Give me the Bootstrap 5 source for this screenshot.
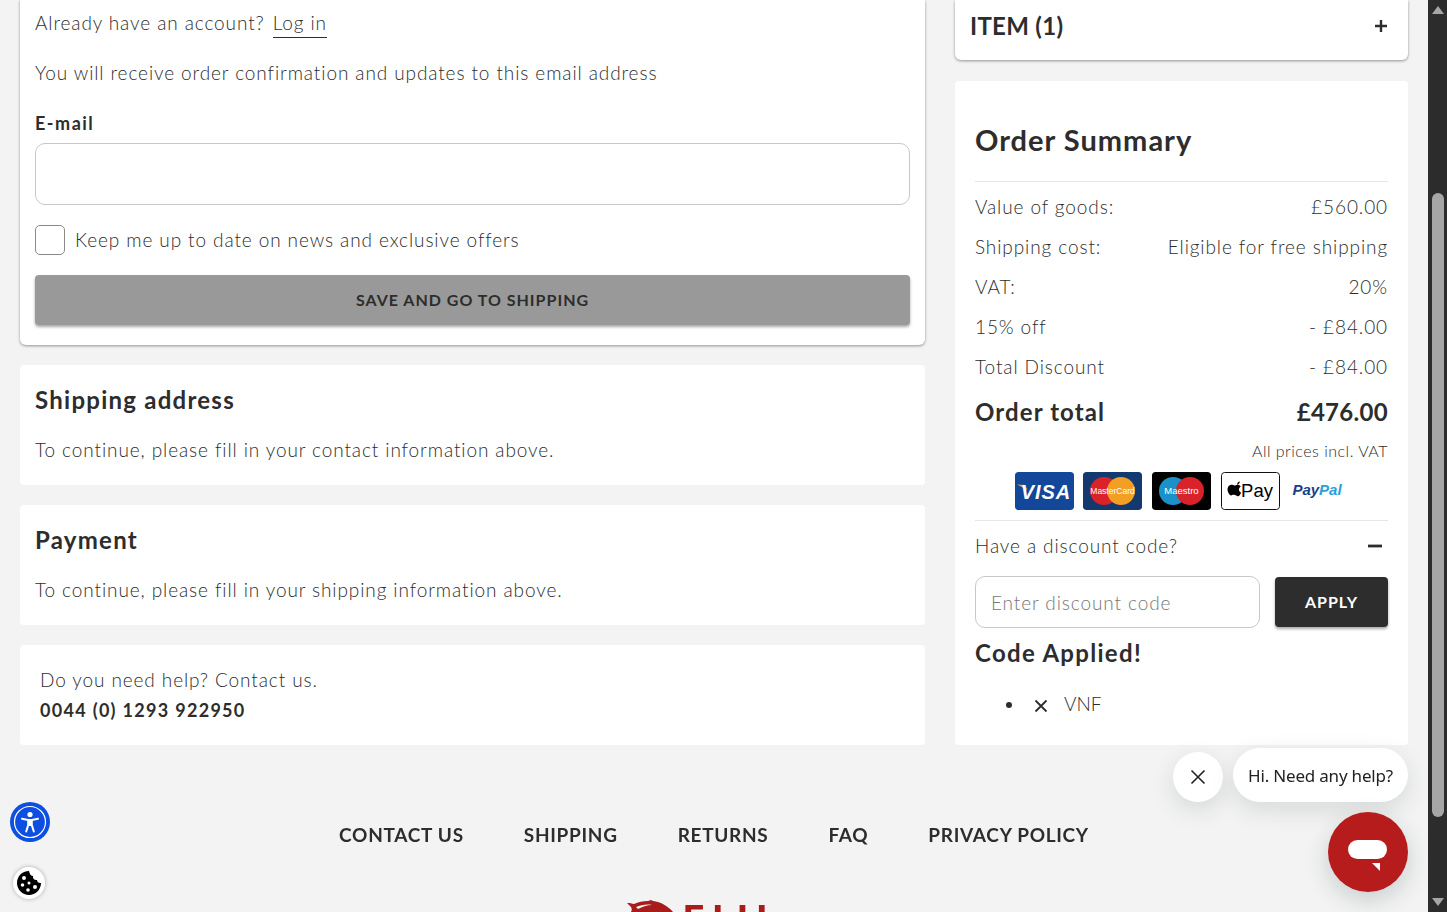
<!DOCTYPE html>
<html lang="en">
<head>
  <meta charset="UTF-8">
  <meta name="viewport" content="width=device-width, initial-scale=1.0">
  <title>Checkout</title>
  <link href="https://cdn.jsdelivr.net/npm/bootstrap@5.3.0/dist/css/bootstrap.min.css" rel="stylesheet">
  <style>
    html, body { height: 912px; overflow: hidden; }
    body {
      background: #f3f3f3;
      color: #2d2d2d;
      font-family: "Lato", "Liberation Sans", sans-serif;
      font-size: 19px;
      font-weight: 300;
      line-height: 30px;
      letter-spacing: .9px;
    }
    .page-wrap { width: 1428px; height: 912px; overflow: hidden; padding: 0 20px; }
    .left-col { width: 905px; }
    .right-col { width: 453px; }
    .panel { background: #fff; border-radius: 4px; padding: 20px 15px; margin-bottom: 20px; }
    .panel-open { box-shadow: 0 1px 3px rgba(0,0,0,.4); border-radius: 0 0 6px 6px; }
    .panel-first { padding-top: 8px; }
    .para-gap { margin: 0 0 20px; }
    .login-link { color: #2d2d2d; text-decoration: none; border-bottom: 1px solid #2d2d2d; padding-bottom: 3px; margin-left: 2px; }
    .field-label { font-size: 18px; font-weight: 700; display: block; margin-bottom: 5px; letter-spacing: 1.5px; }
    .mail-input { height: 62px; border: 1px solid #c8c8c8; border-radius: 10px; margin-bottom: 20px; }
    .tick-box { width: 30px; height: 30px; border: 1px solid #8a8a8a; border-radius: 5px; margin: 0 2px 0 0; flex: none; background: #fff; appearance: none; }
    .save-btn {
      width: 100%; height: 50px; margin-top: 20px; background: #999; color: #2d2d2d; border: 0; border-radius: 4px;
      font-size: 16px; font-weight: 700; letter-spacing: 1px; box-shadow: 0 2px 3px rgba(0,0,0,.35);
    }
    .step-title { font-size: 24px; font-weight: 700; line-height: 30px; margin: 0 0 20px; letter-spacing: 1.25px; }
    .help-panel { padding: 20px; }
    .help-num { font-size: 18px; font-weight: 700; letter-spacing: 1.3px; }
    .item-panel { height: 60px; padding: 11px 20px 0 15px; margin-bottom: 21px; }
    .item-title { font-size: 24px; font-weight: 700; letter-spacing: .3px; }
    .summary-panel { height: 664px; padding: 39px 20px 0; margin: 0; }
    .summary-title { font-size: 29px; font-weight: 700; line-height: 40px; letter-spacing: 1px; margin: 0 0 21px; }
    .thin-rule { border-top: 1px solid #e6e6e6; }
    .sum-row { height: 40px; line-height: 30px; padding-top: 10px; }
    .sum-total { height: 49px; padding-top: 15px; font-size: 24px; font-weight: 700; line-height: 30px; letter-spacing: 1.1px; }
    .total-val { letter-spacing: .3px; }
    .incl-vat { font-size: 16px; line-height: 20px; text-align: right; margin-top: 10px; letter-spacing: .5px; }
    .pay-icons { height: 38px; margin: 11px 0 10px; gap: 9.6px; }
    .pay-card { width: 59px; height: 38px; border-radius: 3px; display: block; }
    .discount-row { height: 55px; padding-top: 10px; }
    .minus-icon { margin: 8px 6px 0 0; }
    .code-input { width: 285px; height: 52px; border: 1px solid #c8c8c8; border-radius: 10px; padding: 0 15px; font-size: 19px; font-weight: 300; letter-spacing: .9px; font-family: inherit; color: #2d2d2d; background: #fff; }
    .code-input::placeholder { color: #777; opacity: 1; }
    .apply-btn { width: 113px; height: 50px; background: #2d2d2d; color: #fff; border: 0; border-radius: 4px; font-size: 16px; font-weight: 700; letter-spacing: 1px; box-shadow: 0 2px 3px rgba(0,0,0,.35); }
    .applied-title { font-size: 24px; font-weight: 700; line-height: 30px; margin: 10px 0 20px; letter-spacing: 1.3px; }
    .code-list { margin: 0; padding-left: 50px; }
    .code-list li { padding-top: 1px; letter-spacing: 0; }
    .code-x { margin: 0 16px 0 9px; }
    .foot-nav { position: fixed; left: 0; top: 820px; width: 1428px; gap: 60px; }
    .foot-nav a { color: #2d2d2d; font-size: 19px; font-weight: 700; letter-spacing: .7px; text-decoration: none; }
    .foot-logo { position: fixed; left: 0; top: 900px; width: 1402px; height: 12px; gap: 10px; }
    .logo-word { color: #a81c1c; font-size: 38px; font-weight: 900; line-height: 38px; letter-spacing: 8px; margin-top: -1px; }
    .fake-bar { position: fixed; top: 0; right: 0; width: 19px; height: 912px; background: #2c2c2c; }
    .fake-thumb { position: absolute; left: 4px; top: 193px; width: 12px; height: 624px; background: #a6a6a6; border-radius: 6px; }
    .bar-arrow { position: absolute; left: 4px; width: 0; height: 0; border-left: 6px solid transparent; border-right: 6px solid transparent; }
    .arrow-up { top: 6px; border-bottom: 8px solid #a6a6a6; }
    .arrow-down { bottom: 6px; border-top: 8px solid #a6a6a6; }
    .access-btn { position: fixed; left: 10px; top: 802px; width: 40px; height: 40px; border-radius: 50%; background: #0d4fe0; }
    .cookie-btn { position: fixed; left: 13px; top: 867px; width: 32px; height: 32px; border-radius: 50%; background: #fff; box-shadow: 0 0 4px rgba(0,0,0,.3); }
    .chat-close { position: fixed; left: 1173px; top: 752px; width: 50px; height: 50px; border-radius: 50%; background: #fff; box-shadow: 0 8px 24px rgba(0,40,40,.12); }
    .chat-bubble {
      position: fixed; left: 1233px; top: 748px; width: 175px; height: 54px; border-radius: 27px; background: #fff; color: #222;
      font-family: "Noto Sans", sans-serif; font-weight: 400; font-size: 17px; letter-spacing: -.2px; line-height: 55px; text-align: center;
      box-shadow: 0 8px 24px rgba(0,40,40,.12);
    }
    .chat-launch { position: fixed; left: 1328px; top: 812px; width: 80px; height: 80px; border-radius: 50%; background: #b71c1c; box-shadow: 0 8px 24px rgba(0,40,40,.18); }
  </style>
</head>
<body>

<div class="page-wrap d-flex justify-content-between">
  <div class="left-col">
    <div class="panel panel-open panel-first">
      <p class="para-gap">Already have an account? <a href="#" class="login-link">Log in</a></p>
      <p class="para-gap">You will receive order confirmation and updates to this email address</p>
      <label class="field-label" for="mail">E-mail</label>
      <input id="mail" type="email" class="form-control mail-input">
      <div class="d-flex align-items-center gap-2">
        <input type="checkbox" class="tick-box" id="news">
        <label for="news">Keep me up to date on news and exclusive offers</label>
      </div>
      <button class="save-btn">SAVE AND GO TO SHIPPING</button>
    </div>

    <div class="panel">
      <h2 class="step-title">Shipping address</h2>
      <div>To continue, please fill in your contact information above.</div>
    </div>

    <div class="panel">
      <h2 class="step-title">Payment</h2>
      <div>To continue, please fill in your shipping information above.</div>
    </div>

    <div class="panel help-panel">
      <div>Do you need help? Contact us.</div>
      <div class="help-num">0044 (0) 1293 922950</div>
    </div>
  </div>

  <div class="right-col">
    <div class="panel panel-open item-panel d-flex justify-content-between">
      <span class="item-title">ITEM (1)</span>
      <svg width="14" height="14" viewBox="0 0 14 14" class="mt-2"><path d="M7 1v12M1 7h12" stroke="#2d2d2d" stroke-width="2.4"/></svg>
    </div>

    <div class="panel summary-panel">
      <h2 class="summary-title">Order Summary</h2>
      <div class="thin-rule"></div>
      <div class="d-flex justify-content-between sum-row"><span>Value of goods:</span><span>£560.00</span></div>
      <div class="d-flex justify-content-between sum-row"><span>Shipping cost:</span><span>Eligible for free shipping</span></div>
      <div class="d-flex justify-content-between sum-row"><span>VAT:</span><span>20%</span></div>
      <div class="d-flex justify-content-between sum-row"><span>15% off</span><span>- £84.00</span></div>
      <div class="d-flex justify-content-between sum-row"><span>Total Discount</span><span>- £84.00</span></div>
      <div class="d-flex justify-content-between sum-total"><span>Order total</span><span class="total-val">£476.00</span></div>
      <div class="incl-vat">All prices incl. VAT</div>

      <div class="d-flex justify-content-center pay-icons">
        <svg class="pay-card" viewBox="0 0 59 38"><rect width="59" height="38" rx="3" fill="#13479a"/><path d="M2 12.500l8 .5 2.500 5z" fill="#f0a81e"/><text x="31" y="26.500" text-anchor="middle" font-family="Liberation Sans" font-size="20" font-weight="700" font-style="italic" fill="#fff">VISA</text></svg>
        <svg class="pay-card" viewBox="0 0 59 38"><rect width="59" height="38" rx="3" fill="#14396f"/><circle cx="21" cy="19" r="14" fill="#d9222a"/><circle cx="38" cy="19" r="14" fill="#f29f24"/><text x="29.500" y="22" text-anchor="middle" font-family="Liberation Sans" font-size="8.500" font-weight="400" fill="#fff" letter-spacing="0">MasterCard</text></svg>
        <svg class="pay-card" viewBox="0 0 59 38"><rect width="59" height="38" rx="3" fill="#000"/><circle cx="21" cy="19" r="14" fill="#1a92c9"/><circle cx="38" cy="19" r="14" fill="#d9222a"/><text x="29.500" y="22" text-anchor="middle" font-family="Liberation Sans" font-size="9.500" font-weight="400" fill="#fff" letter-spacing="0">Maestro</text></svg>
        <svg class="pay-card" viewBox="0 0 59 38"><rect x=".5" y=".5" width="58" height="37" rx="3" fill="#fff" stroke="#111"/><path d="M13.600 14.200c.2-1.800 1.300-3 3-3.300.1 1.800-1.200 3.200-3 3.300zM12.800 26c-1.100 0-1.600-.7-2.900-.7s-1.700.7-2.700.7C5.200 26 3 21.500 3.300 18.800c.3-3 2.400-4.300 4.200-4.300 1.400 0 2.400.8 3.300.8s1.700-.9 3.500-.9c1.300 0 2.600.6 3.400 1.800-2.900 1.800-2.400 5.500.5 6.700-.8 1.800-2.100 4.100-3.400 4.100-1 0-1.400-.6-2-.6z" transform="translate(3.500 -.5) scale(.92)" fill="#000"/><text x="36" y="25" text-anchor="middle" font-family="Liberation Sans" font-size="18.500" fill="#000" letter-spacing="0">Pay</text></svg>
        <svg class="pay-card" viewBox="0 0 59 38"><text x="28" y="23" text-anchor="middle" font-family="Liberation Sans" font-size="15" font-weight="700" font-style="italic" letter-spacing="0"><tspan fill="#1b3f8b">Pay</tspan><tspan fill="#2a9fd8">Pal</tspan></text></svg>
      </div>

      <div class="thin-rule"></div>
      <div class="d-flex justify-content-between discount-row">
        <span>Have a discount code?</span>
        <svg width="14" height="14" viewBox="0 0 14 14" class="minus-icon"><path d="M0 7h14" stroke="#2d2d2d" stroke-width="2.800"/></svg>
      </div>
      <div class="d-flex justify-content-between align-items-center">
        <input type="text" class="code-input" placeholder="Enter discount code">
        <button class="apply-btn">APPLY</button>
      </div>
      <h3 class="applied-title">Code Applied!</h3>
      <ul class="code-list">
        <li><svg width="14" height="14" viewBox="0 0 14 14" class="code-x"><path d="M1.500 1.500l11 11M12.500 1.500l-11 11" stroke="#2d2d2d" stroke-width="1.800"/></svg>VNF</li>
      </ul>
    </div>
  </div>
</div>

<div class="fake-bar">
  <div class="bar-arrow arrow-up"></div>
  <div class="fake-thumb"></div>
  <div class="bar-arrow arrow-down"></div>
</div>

<nav class="d-flex justify-content-center foot-nav">
  <a href="#">CONTACT US</a><a href="#">SHIPPING</a><a href="#">RETURNS</a><a href="#">FAQ</a><a href="#">PRIVACY POLICY</a>
</nav>

<div class="access-btn d-flex align-items-center justify-content-center">
  <svg width="36" height="36" viewBox="0 0 36 36"><circle cx="18" cy="18" r="15.500" fill="none" stroke="#fff" stroke-width="1.200"/><circle cx="18" cy="10.500" r="2.600" fill="#fff"/><path d="M10 14.800l6 1.200h4l6-1.200M16.200 16v5l-2 6.500M19.800 16v5l2 6.500" stroke="#fff" stroke-width="2" fill="none" stroke-linecap="round"/><path d="M16.500 16h3v6h-3z" fill="#fff"/></svg>
</div>
<div class="cookie-btn d-flex align-items-center justify-content-center">
  <svg width="26" height="26" viewBox="0 0 26 26"><path d="M13 1C6 1 1 6.500 1 13s5.500 12 12 12 12-5.500 12-12c-2 .5-4-1-4-3-2.500.5-4.500-1.500-4-4-2 0-3.500-2-4-5z" fill="#000"/><circle cx="8" cy="8" r="2" fill="#fff"/><circle cx="6.500" cy="15" r="1.800" fill="#fff"/><circle cx="13" cy="13" r="1.500" fill="#fff"/><circle cx="12" cy="20" r="1.800" fill="#fff"/><circle cx="19" cy="17" r="2" fill="#fff"/></svg>
</div>

<div class="chat-close d-flex align-items-center justify-content-center">
  <svg width="16" height="16" viewBox="0 0 16 16"><path d="M1.500 1.500l13 13M14.500 1.500l-13 13" stroke="#222" stroke-width="1.600"/></svg>
</div>
<div class="chat-bubble">Hi. Need any help?</div>
<div class="chat-launch d-flex align-items-center justify-content-center">
  <svg width="40" height="38" viewBox="0 0 40 38"><rect y="7" width="39" height="19" rx="9.500" fill="#fff"/><path d="M24 30h8v8z" fill="#fff"/></svg>
</div>

<div class="d-flex justify-content-center foot-logo overflow-hidden">
  <svg width="46" height="12" viewBox="0 0 46 12" class="flex-none"><path d="M0 3c3 0 5 .5 7 1 4-2 9-3 14-3l3-1 2 1c8 1 15 5 20 11H4c1-2 1-3 0-5z" fill="#a81c1c"/><path d="M9 7c5-2 11-3 16-2-5 0-10 2-14 4z" fill="#f3f3f3"/></svg>
  <span class="logo-word">FIJI</span>
</div>

</body>
</html>
